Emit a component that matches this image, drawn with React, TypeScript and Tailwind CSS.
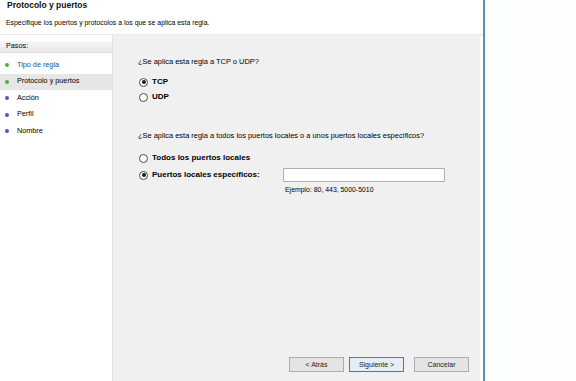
import React from 'react';

type Step = { label: string; done: boolean; current?: boolean; link?: boolean };

const steps: Step[] = [
  { label: 'Tipo de regla', done: true, link: true },
  { label: 'Protocolo y puertos', done: true, current: true },
  { label: 'Acción', done: false },
  { label: 'Perfil', done: false },
  { label: 'Nombre', done: false },
];

const Radio: React.FC<{ checked?: boolean }> = ({ checked }) => (
  <span className="flex h-[9px] w-[9px] shrink-0 items-center justify-center rounded-full border border-[#4a4a4a] bg-white">
    {checked && <span className="h-[4px] w-[4px] rounded-full bg-[#1a1a1a]" />}
  </span>
);

const WizButton: React.FC<{ label: string; primary?: boolean }> = ({ label, primary }) => (
  <button
    className={`flex h-[15px] w-[55px] items-center justify-center border text-[7px] leading-none text-[#222] ${
      primary ? 'border-[#3c7fb1] bg-[#e5eef6]' : 'border-[#adadad] bg-[#e4e4e4]'
    }`}
  >
    {label}
  </button>
);

export default function App() {
  return (
    <div className="flex h-[381px] w-[576px] overflow-hidden bg-[#fbfdfe] font-['Liberation_Sans',Arial,sans-serif] text-black">
      {/* Wizard window */}
      <div className="flex w-[485px] shrink-0 flex-col border-r-2 border-[#5f8db6] bg-white">
        {/* Header */}
        <div className="h-[35px] shrink-0 border-b border-[#e8e8e8] px-[7px]">
          <div className="text-[8.5px] font-bold leading-[10px] text-[#111]">Protocolo y puertos</div>
          <div className="-ml-[1px] mt-[8px] text-[6.9px] leading-[10px]">
            Especifique los puertos y protocolos a los que se aplica esta regla.
          </div>
        </div>

        {/* Body */}
        <div className="flex min-h-0 flex-1">
          {/* Steps */}
          <div className="w-[113px] shrink-0 border-r border-[#e2e2e2] bg-white pt-[6px]">
            <div className="flex h-[12px] items-center border-b border-[#dedede] bg-gradient-to-b from-[#f6f6f6] to-[#e9e9e9] pl-[6px] text-[7.25px]">
              Pasos:
            </div>
            <div className="mt-[4px]">
              {steps.map((s) => (
                <div
                  key={s.label}
                  className={`flex h-[16.5px] items-center pl-[5px] text-[7.25px] ${s.current ? 'bg-[#e6e6e6]' : ''}`}
                >
                  <span
                    className={`h-[4px] w-[4px] rounded-full ${s.done ? 'bg-[#5aa848]' : 'bg-[#5858a8]'}`}
                  />
                  <span className={`ml-[8px] ${s.link ? 'text-[#275486]' : 'text-black'}`}>{s.label}</span>
                </div>
              ))}
            </div>
          </div>

          {/* Content */}
          <div className="mr-[3px] flex flex-1 flex-col bg-[#f0f0f0] pl-[25px] pt-[22px]">
            <div className="text-[7.45px] leading-[10px]">¿Se aplica esta regla a TCP o UDP?</div>

            <div className="mt-[9px] flex h-[12px] items-center gap-[4px] pl-[1px]">
              <Radio checked />
              <span className="text-[8px] font-bold">TCP</span>
            </div>
            <div className="mt-[3px] flex h-[12px] items-center gap-[4px] pl-[1px]">
              <Radio />
              <span className="text-[8px] font-bold">UDP</span>
            </div>

            <div className="mt-[28px] text-[7.45px] leading-[10px]">
              ¿Se aplica esta regla a todos los puertos locales o a unos puertos locales específicos?
            </div>

            <div className="mt-[11px] flex h-[12px] items-center gap-[4px] pl-[1px]">
              <Radio />
              <span className="text-[8px] font-bold">Todos los puertos locales</span>
            </div>
            <div className="mt-[4px] flex h-[14px] items-center gap-[4px] pl-[1px]">
              <Radio checked />
              <span className="w-[127px] text-[8px] font-bold">Puertos locales específicos:</span>
              <div className="h-[14px] w-[162px] border border-[#b0b0b0] bg-white" />
            </div>
            <div className="mt-[3px] pl-[147px] text-[6.9px] leading-[10px]">Ejemplo: 80, 443, 5000-5010</div>

            {/* Buttons */}
            <div className="mt-auto mb-[9px] flex justify-end pr-[11px]">
              <WizButton label="< Atrás" />
              <div className="ml-[5px]">
                <WizButton label="Siguiente >" primary />
              </div>
              <div className="ml-[10px]">
                <WizButton label="Cancelar" />
              </div>
            </div>
          </div>
        </div>
      </div>
    </div>
  );
}
